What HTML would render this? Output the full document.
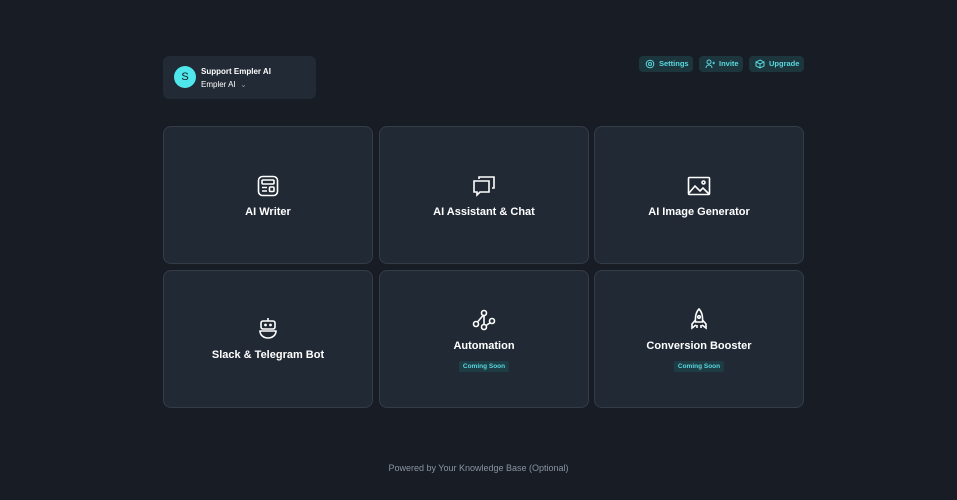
<!DOCTYPE html>
<html><head><style>
*{margin:0;padding:0;box-sizing:border-box}
body{width:957px;height:500px;background:#171c25;font-family:"Liberation Sans",sans-serif;position:relative;overflow:hidden}
.hdr{position:absolute;left:163px;top:56px;width:153px;height:43px;background:#222a35;border-radius:6px}
.av{position:absolute;left:11px;top:10px;width:22px;height:22px;border-radius:50%;background:#4fe6ec;color:#0f1a20;font-size:11px;text-align:center;line-height:22px}
.t1{position:absolute;left:38px;top:11px;color:#fff;font-size:8px;font-weight:bold}
.t2{position:absolute;left:38px;top:24px;color:#fff;font-size:8px}
.btn{position:absolute;top:56px;height:16px;background:#1d353c;border-radius:4px;color:#5ad8e0;font-size:7.5px;font-weight:bold;line-height:16px;padding-left:20px}
.btn svg{position:absolute;left:6px;top:3px}
.card{position:absolute;width:210px;height:138px;background:#212935;border:1px solid #343c48;border-radius:8px}
.card svg{position:absolute;left:50%;transform:translateX(-50%)}
.ct{position:absolute;left:0;right:0;text-align:center;color:#fff;font-size:11px;font-weight:bold}
.badge{position:absolute;left:50%;transform:translateX(-50%);background:#1d3c44;color:#5ad8e0;font-size:6.5px;font-weight:bold;padding:2px 4px;border-radius:2px;white-space:nowrap}
.foot{position:absolute;top:463px;left:0;right:0;text-align:center;color:#8a94a3;font-size:9px}
</style></head><body>
<div class="hdr"><div class="av">S</div><div class="t1">Support Empler AI</div><div class="t2">Empler AI &nbsp;<span style="color:#8a94a3">⌄</span></div></div>
<div class="btn" style="left:639px;width:54px"><svg width="10" height="10" viewBox="0 0 10 10" fill="none" stroke="#5ad8e0" stroke-width="1"><circle cx="5" cy="5" r="1.5"/><circle cx="5" cy="5" r="3.8"/></svg>Settings</div>
<div class="btn" style="left:699px;width:44px"><svg width="10" height="10" viewBox="0 0 10 10" fill="none" stroke="#5ad8e0" stroke-width="1"><circle cx="4" cy="3" r="2"/><path d="M1 9c0-2 1.5-3 3-3s3 1 3 3M7.5 4h2.5M8.7 2.8v2.5"/></svg>Invite</div>
<div class="btn" style="left:749px;width:55px"><svg width="10" height="10" viewBox="0 0 10 10" fill="none" stroke="#5ad8e0" stroke-width="1"><path d="M5 1l4 2v4L5 9 1 7V3zM1 3l4 2 4-2M5 5v4"/></svg>Upgrade</div>

<div class="card" style="left:163px;top:126px"><svg style="top:48px" width="22" height="22" viewBox="0 0 22 22" fill="none" stroke="#fff" stroke-width="1.6"><rect x="1.5" y="1.5" width="19" height="19" rx="4"/><rect x="5" y="5" width="12" height="4" rx="1"/><path d="M5 12.5h5M5 16h5"/><rect x="12.5" y="12" width="4.5" height="4.5" rx="1"/></svg><div class="ct" style="top:79px">AI Writer</div></div>
<div class="card" style="left:379px;top:126px"><svg style="top:48px" width="24" height="22" viewBox="0 0 24 22" fill="none" stroke="#fff" stroke-width="1.6"><path d="M7 4V2h15v11h-2"/><path d="M2 6h15v11H8l-3 3v-3H2z"/></svg><div class="ct" style="top:79px">AI Assistant &amp; Chat</div></div>
<div class="card" style="left:594px;top:126px"><svg style="top:49px" width="24" height="20" viewBox="0 0 24 20" fill="none" stroke="#fff" stroke-width="1.6"><rect x="1.5" y="1.5" width="21" height="17" rx="1"/><path d="M2 17l6-7 5 5 3-3 6 6"/><circle cx="16.5" cy="6.5" r="1.5"/></svg><div class="ct" style="top:79px">AI Image Generator</div></div>

<div class="card" style="left:163px;top:270px"><svg style="top:46px" width="20" height="24" viewBox="0 0 20 24" fill="none" stroke="#fff" stroke-width="1.6"><path d="M10 1v3"/><rect x="3" y="4" width="14" height="8" rx="2"/><circle cx="7.5" cy="8" r=".6" fill="#fff"/><circle cx="12.5" cy="8" r=".6" fill="#fff"/><path d="M2 14h16c0 4-3.5 7-8 7s-8-3-8-7z"/></svg><div class="ct" style="top:78px">Slack &amp; Telegram Bot</div></div>
<div class="card" style="left:379px;top:270px"><svg style="top:38px" width="24" height="22" viewBox="0 0 24 22" fill="none" stroke="#fff" stroke-width="1.6"><circle cx="12" cy="4" r="2.5"/><circle cx="4" cy="15" r="2.5"/><circle cx="12" cy="18" r="2.5"/><circle cx="20" cy="12" r="2.5"/><path d="M11 6.5L5.5 13M12 6.5v9M14 16.5l4.5-3"/></svg><div class="ct" style="top:69px">Automation</div><div class="badge" style="top:90px">Coming Soon</div></div>
<div class="card" style="left:594px;top:270px"><svg style="top:37px" width="20" height="24" viewBox="0 0 20 24" fill="none" stroke="#fff" stroke-width="1.6"><path d="M10 1c3 3 4 7 3.5 13h-7C6 8 7 4 10 1z"/><circle cx="10" cy="9" r="1.3"/><path d="M6.5 12L3 16v4l4-3M13.5 12l3.5 4v4l-4-3M8 17v3M12 17v3"/></svg><div class="ct" style="top:69px">Conversion Booster</div><div class="badge" style="top:90px">Coming Soon</div></div>

<div class="foot">Powered by Your Knowledge Base (Optional)</div>
</body></html>
